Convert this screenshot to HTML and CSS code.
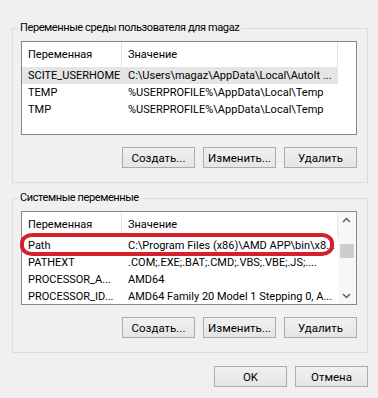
FILE: index.html
```html
<!DOCTYPE html>
<html lang="ru">
<head>
  <meta charset="UTF-8" />
  <meta name="viewport" content="width=device-width, initial-scale=1.0"/>
  <title>Переменные среды</title>
  <link rel="stylesheet" href="styles.css">
</head>
<body>
  <div class="window">

    <fieldset class="group">
      <legend>Переменные среды пользователя для magaz</legend>
      <div class="list">
        <div class="list-body">
          <div class="row head"><span>Переменная</span><span>Значение</span></div>
          <div class="row selected"><span>SCITE_USERHOME</span><span>C:\Users\magaz\AppData\Local\AutoIt ...</span></div>
          <div class="row"><span>TEMP</span><span>%USERPROFILE%\AppData\Local\Temp</span></div>
          <div class="row"><span>TMP</span><span>%USERPROFILE%\AppData\Local\Temp</span></div>
        </div>
        <div class="head-filler"></div>
      </div>
      <div class="buttons">
        <button class="btn">Создать...</button>
        <button class="btn">Изменить...</button>
        <button class="btn">Удалить</button>
      </div>
    </fieldset>

    <fieldset class="group group-system">
      <legend>Системные переменные</legend>
      <div class="list">
        <div class="list-body">
          <div class="row head"><span>Переменная</span><span>Значение</span></div>
          <div class="row"><span>Path</span><span>C:\Program Files (x86)\AMD APP\bin\x8...</span></div>
          <div class="row"><span>PATHEXT</span><span>.COM;.EXE;.BAT;.CMD;.VBS;.VBE;.JS;....</span></div>
          <div class="row"><span>PROCESSOR_A...</span><span>AMD64</span></div>
          <div class="row"><span>PROCESSOR_ID...</span><span>AMD64 Family 20 Model 1 Stepping 0, A...</span></div>
        </div>
        <div class="scrollbar">
          <svg class="arrow" width="17" height="17" viewBox="0 0 17 17">
            <polyline points="5,10 8.5,6.5 12,10" fill="none" stroke="#606060" stroke-width="1.5"/>
          </svg>
          <div class="track"><div class="thumb"></div></div>
          <svg class="arrow" width="17" height="17" viewBox="0 0 17 17">
            <polyline points="5,7 8.5,10.5 12,7" fill="none" stroke="#606060" stroke-width="1.5"/>
          </svg>
        </div>
        <!-- пометка вокруг строки Path -->
        <div class="mark"></div>
      </div>
      <div class="buttons">
        <button class="btn">Создать...</button>
        <button class="btn">Изменить...</button>
        <button class="btn">Удалить</button>
      </div>
    </fieldset>

    <div class="buttons dialog-buttons">
      <button class="btn">OK</button>
      <button class="btn">Отмена</button>
    </div>

  </div>
</body>
</html>
```

FILE: styles.css
```css
body {
  margin: 0;
  background-color: #f0f0f0;
  font-family: Roboto, "Noto Sans", sans-serif;
  font-size: 11px;
  color: #000;
}

.window {
  padding: 20px 10px 0 12px;
}

.group {
  margin: 0;
  padding: 5px 10px 14px 8px;
  border: 1px solid #dcdcdc;
  min-width: 0;
}

.group legend {
  padding: 0 2px;
  margin-left: -3px;
  line-height: 16px;
  letter-spacing: -0.4px;
}

.group-system {
  margin-top: 7px;
}

/* list view */
.list {
  position: relative;
  display: flex;
  height: 92px;
  border: 1px solid #828790;
  background-color: #fff;
}

.list-body {
  width: 316px;
  overflow: hidden;
}

.row {
  display: grid;
  grid-template-columns: 100px 216px;
  height: 17px;
  line-height: 17px;
}

.row span {
  padding-left: 6px;
  white-space: nowrap;
  overflow: hidden;
}

.row.head {
  height: 25px;
  line-height: 25px;
}

.row.head span {
  border-right: 1px solid #e5e5e5;
}

.row.selected {
  background-color: #e5e5e5;
}

.head-filler {
  flex: 1;
  height: 25px;
}

.scrollbar {
  flex: 1;
  display: flex;
  flex-direction: column;
  background-color: #f7f7f7;
}

.scrollbar .arrow {
  display: block;
}

.track {
  flex: 1;
  padding: 15px 2px 0 2px;
}

.thumb {
  height: 14px;
  background-color: #cdcdcd;
}

.mark {
  position: absolute;
  left: -2px;
  top: 21px;
  width: 306px;
  height: 15px;
  border: 4px solid #d3222c;
  border-radius: 12px / 10px;
}

/* buttons */
.buttons {
  display: flex;
  justify-content: flex-end;
  gap: 8px;
  margin-top: 12px;
}

.btn {
  width: 73px;
  height: 21px;
  padding: 0;
  border: 1px solid #acacac;
  background: linear-gradient(#f0f0f0, #e5e5e5);
  font-family: inherit;
  font-size: 11.5px;
  color: #000;
}

.dialog-buttons {
  margin-top: 13px;
}
```
